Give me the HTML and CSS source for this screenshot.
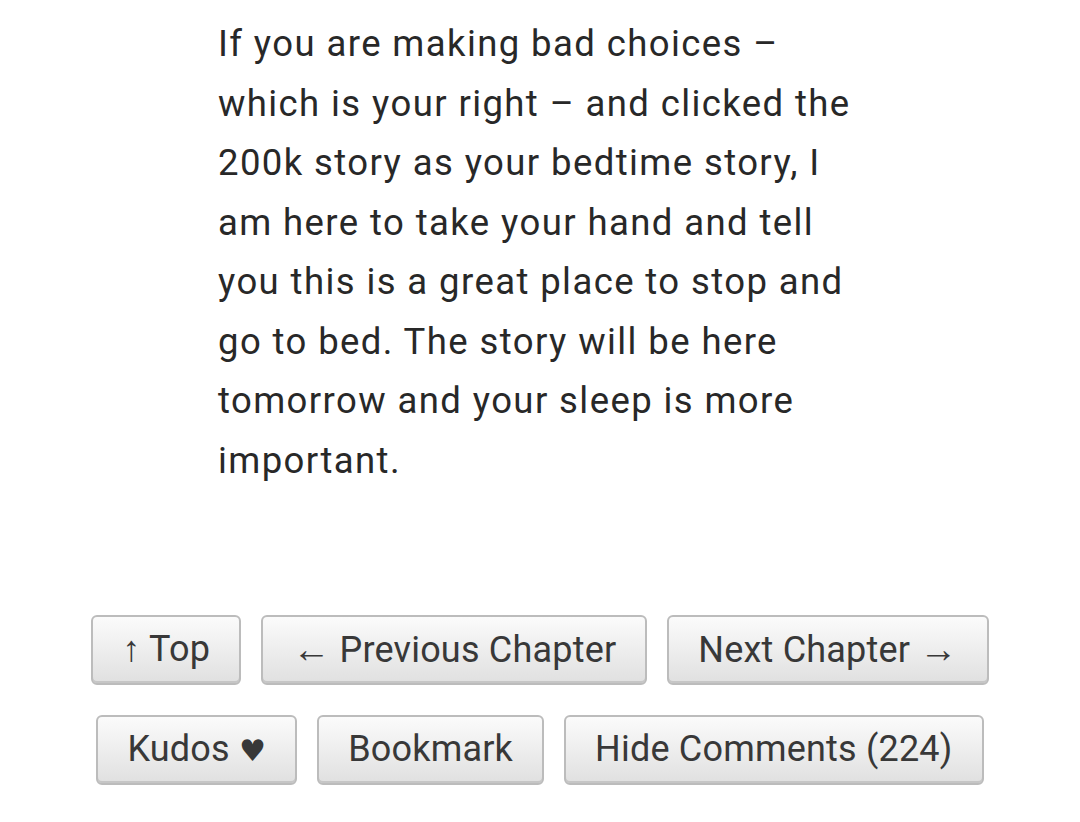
FILE: index.html
```html
<!DOCTYPE html>
<html lang="en">
<head>
<meta charset="utf-8">
<link rel="stylesheet" href="styles.css">
<title>Chapter</title>
</head>
<body>
<main class="chapter">
  <div class="notes">
    <p>If you are making bad choices – which is your right – and clicked the 200k story as your bedtime story, I am here to take your hand and tell you this is a great place to stop and go to bed. The story will be here tomorrow and your sleep is more important.</p>
  </div>
  <nav class="actions">
    <ul class="row">
      <li><a class="btn" href="#"><span class="up">↑</span> Top</a></li>
      <li><a class="btn" href="#"><span class="arrow">←</span> Previous Chapter</a></li>
      <li><a class="btn" href="#">Next Chapter <span class="arrow">→</span></a></li>
    </ul>
    <ul class="row">
      <li><a class="btn" href="#">Kudos <span class="heart">♥</span></a></li>
      <li><a class="btn" href="#">Bookmark</a></li>
      <li><a class="btn" href="#">Hide Comments (224)</a></li>
    </ul>
  </nav>
</main>
</body>
</html>
```
FILE: styles.css
```css
html, body {
  margin: 0;
  padding: 0;
  background: #fff;
}

body {
  font-family: Roboto, "Liberation Sans", sans-serif;
  color: #282828;
  width: 1080px;
  height: 822px;
  overflow: hidden;
}

.notes {
  padding: 14px 0 0 218px;
  width: 650px;
}

.notes p {
  margin: 0;
  font-size: 36.5px;
  line-height: 59.5px;
  letter-spacing: 1.4px;
}

.actions {
  margin-top: 125px;
  display: flex;
  flex-direction: column;
  gap: 30px;
}

.row {
  list-style: none;
  margin: 0;
  padding: 0;
  display: flex;
  justify-content: center;
  gap: 20px;
}

.btn {
  display: block;
  box-sizing: border-box;
  height: 70px;
  padding: 0 29px;
  line-height: 64px;
  font-size: 36px;
  letter-spacing: 0.2px;
  color: #383838;
  text-decoration: none;
  border: 2px solid #bcbcbc;
  border-radius: 6px;
  background: linear-gradient(#fbfbfb, #e0e0e0);
  box-shadow: inset 0 -2px 0 #c6c6c6;
}

.arrow {
  font-size: 38px;
}

.up {
  font-weight: 300;
}

.heart {
  font-family: "DejaVu Sans", sans-serif;
  font-size: 30px;
}
```
